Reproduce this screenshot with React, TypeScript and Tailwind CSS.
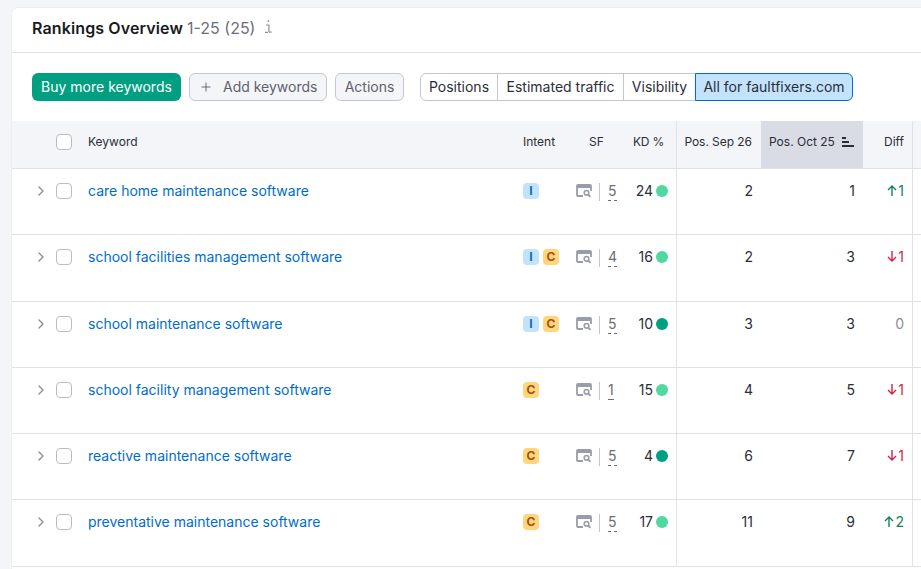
import React from 'react';
import { ChevronRight, Plus } from 'lucide-react';

const rowGrid = 'grid grid-cols-[76px_435px_52px_51px_50px_85px_102px_50px_1fr]';

type Row = {
  keyword: string;
  intent: string[];
  sf: number;
  kd: number;
  dark?: boolean;
  sep: number;
  oct: number;
  diff: number;
};

const rows: Row[] = [
  { keyword: 'care home maintenance software', intent: ['I'], sf: 5, kd: 24, sep: 2, oct: 1, diff: 1 },
  { keyword: 'school facilities management software', intent: ['I', 'C'], sf: 4, kd: 16, sep: 2, oct: 3, diff: -1 },
  { keyword: 'school maintenance software', intent: ['I', 'C'], sf: 5, kd: 10, dark: true, sep: 3, oct: 3, diff: 0 },
  { keyword: 'school facility management software', intent: ['C'], sf: 1, kd: 15, sep: 4, oct: 5, diff: -1 },
  { keyword: 'reactive maintenance software', intent: ['C'], sf: 5, kd: 4, dark: true, sep: 6, oct: 7, diff: -1 },
  { keyword: 'preventative maintenance software', intent: ['C'], sf: 5, kd: 17, sep: 11, oct: 9, diff: 2 },
];

function Checkbox() {
  return <span className="block h-4 w-4 rounded-[4px] border border-[#b9bcc9] bg-white" />;
}

function InfoIcon() {
  return (
    <svg width="7" height="13" viewBox="0 0 7 13" fill="none" className="text-[#8a8e9b]">
      <rect x="2.6" y="0.4" width="1.6" height="1.6" fill="currentColor" />
      <path d="M1 5h2.9v6.2c0 .7.5 1 1.1 1H6.6M0 12.3h3" stroke="currentColor" strokeWidth="1.2" />
    </svg>
  );
}

function SerpIcon() {
  return (
    <svg width="16" height="14" viewBox="0 0 16 14" fill="none" className="text-[#9a9da9]">
      <path d="M7 12H2a1 1 0 0 1-1-1V2a1 1 0 0 1 1-1h12a1 1 0 0 1 1 1v5" stroke="currentColor" strokeWidth="1.8" />
      <path d="M1 3h14" stroke="currentColor" strokeWidth="2" />
      <circle cx="10.5" cy="8.8" r="2.3" stroke="currentColor" strokeWidth="1.6" />
      <path d="M12.2 10.5L14.5 12.8" stroke="currentColor" strokeWidth="1.8" />
    </svg>
  );
}

function SortIcon() {
  return (
    <svg width="12" height="10" viewBox="0 0 12 10" className="text-[#2b2e38]">
      <rect x="0" y="0" width="4" height="2" fill="currentColor" />
      <rect x="0" y="4" width="7" height="2" fill="currentColor" />
      <rect x="0" y="8" width="12" height="2" fill="currentColor" />
    </svg>
  );
}

function Arrow({ up }: { up: boolean }) {
  return (
    <svg width="10" height="11" viewBox="0 0 10 11" fill="none" stroke="currentColor" strokeWidth="1.4">
      {up ? <path d="M5 11V1M1 5l4-4 4 4" /> : <path d="M5 0v10M1 6l4 4 4-4" />}
    </svg>
  );
}

function IntentBadge({ type }: { type: string }) {
  const color = type === 'I' ? 'bg-[#c3e3fd] text-[#0a6dbb]' : 'bg-[#ffd57e] text-[#a3520f]';
  return (
    <span className={`flex h-4 w-4 items-center justify-center rounded-[4px] text-[12px] font-bold leading-none ${color}`}>
      {type}
    </span>
  );
}

function Diff({ value }: { value: number }) {
  if (value === 0) {
    return <span className="text-[#8a8e9b]">0</span>;
  }
  const up = value > 0;
  return (
    <span className={`flex items-center gap-[1px] ${up ? 'text-[#13805f]' : 'text-[#d81f46]'}`}>
      <Arrow up={up} />
      {Math.abs(value)}
    </span>
  );
}

export default function App() {
  return (
    <div className="h-[569px] w-[921px] overflow-hidden bg-[#f4f5f9] pl-3 pt-2 font-['Inter',sans-serif] text-[#2b2e38]">
      <div className="h-full rounded-tl-md bg-white shadow-[0_0_0_1px_#eceef3]">
        {/* Title */}
        <div className="flex h-[45px] items-center border-b border-[#e0e1e9] pb-[5px] pl-5 text-base">
          <span className="font-semibold tracking-[0.12px] text-[#191b23]">Rankings Overview</span>
          <span className="ml-[4px] text-[#6c6e79]">1-25 (25)</span>
          <span className="ml-[10px] mt-[-2px]">
            <InfoIcon />
          </span>
        </div>

        {/* Toolbar */}
        <div className="flex h-[68px] items-start pl-5 pt-[20px] text-[14px] leading-[18px]">
          <button className="h-7 w-[149px] rounded-md bg-[#009f81] text-white">Buy more keywords</button>
          <button className="ml-2 flex h-7 w-[138px] items-center rounded-md border border-[#c4c7cf] bg-[#f4f5f9] pl-[9px] text-[#5f616c]">
            <Plus size={14} strokeWidth={1.6} />
            <span className="ml-[10px]">Add keywords</span>
          </button>
          <button className="ml-2 h-7 w-[69px] rounded-md border border-[#c4c7cf] bg-[#f4f5f9] text-[#5f616c]">Actions</button>
          <div className="ml-4 flex h-7 text-[#2b2e38]">
            <span className="flex w-[78px] items-center justify-center rounded-l-md border border-[#c4c7cf]">Positions</span>
            <span className="flex w-[126px] items-center justify-center border-y border-r border-[#c4c7cf]">Estimated traffic</span>
            <span className="flex w-[71px] items-center justify-center border-y border-[#c4c7cf]">Visibility</span>
            <span className="flex w-[158px] items-center justify-center rounded-r-md border border-[#006dca] bg-[#c3e3fd]">All for faultfixers.com</span>
          </div>
        </div>

        {/* Table header */}
        <div className={`${rowGrid} h-12 border-b border-[#e0e1e9] bg-[#f4f5f9] text-xs`}>
          <div className="flex items-center pb-[6px] pl-11">
            <Checkbox />
          </div>
          <div className="flex items-center pb-[6px]">Keyword</div>
          <div className="flex items-center pb-[6px]">Intent</div>
          <div className="flex items-center justify-center pb-[6px] pr-[8px]">SF</div>
          <div className="flex items-center justify-end pb-[6px] pr-[12px] tracking-[-0.2px]">KD %</div>
          <div className="flex items-center justify-end border-l border-[#e0e1e9] pb-[6px] pr-[9px] tracking-[-0.05px]">Pos. Sep 26</div>
          <div className="flex items-center gap-[7px] bg-[#d9dce5] pb-[6px] pl-2">
            Pos. Oct 25
            <SortIcon />
          </div>
          <div className="flex items-center justify-end border-r border-[#e0e1e9] pb-[6px] pr-2">Diff</div>
          <div />
        </div>

        {/* Rows */}
        {rows.map((row) => (
          <div key={row.keyword} className={`${rowGrid} h-[66.25px] border-b border-[#e0e1e9] text-[14px]`}>
            <div className="flex items-start pl-[21px] pt-[14px]">
              <ChevronRight size={16} strokeWidth={2} className="mr-[7px] text-[#8a8e9b]" />
              <Checkbox />
            </div>
            <div className="pt-[11px] text-[#006dca]">{row.keyword}</div>
            <div className="flex items-start gap-1 pt-[14px]">
              {row.intent.map((type) => (
                <IntentBadge key={type} type={type} />
              ))}
            </div>
            <div className="flex items-start pl-[1px] pt-[11px]">
              <span className="mt-[4px]">
                <SerpIcon />
              </span>
              <span className="ml-[7px] mt-[3px] h-[18px] border-l border-[#c4c7cf]" />
              <span className="ml-[8px] mt-[1px] border-b border-dashed border-[#6c6e79] leading-[19px] text-[#6c6e79]">{row.sf}</span>
            </div>
            <div className="flex items-start justify-end gap-[3px] pr-[8px] pt-[11px]">
              {row.kd}
              <span className={`mt-[5px] h-3 w-3 rounded-full ${row.dark ? 'bg-[#009f81]' : 'bg-[#4fd8a0]'}`} />
            </div>
            <div className="border-l border-[#e0e1e9] pr-[8px] pt-[11px] text-right">{row.sep}</div>
            <div className="pr-2 pt-[11px] text-right">{row.oct}</div>
            <div className="flex items-start justify-end border-r border-[#e0e1e9] pr-2 pt-[11px]">
              <Diff value={row.diff} />
            </div>
            <div />
          </div>
        ))}
      </div>
    </div>
  );
}
